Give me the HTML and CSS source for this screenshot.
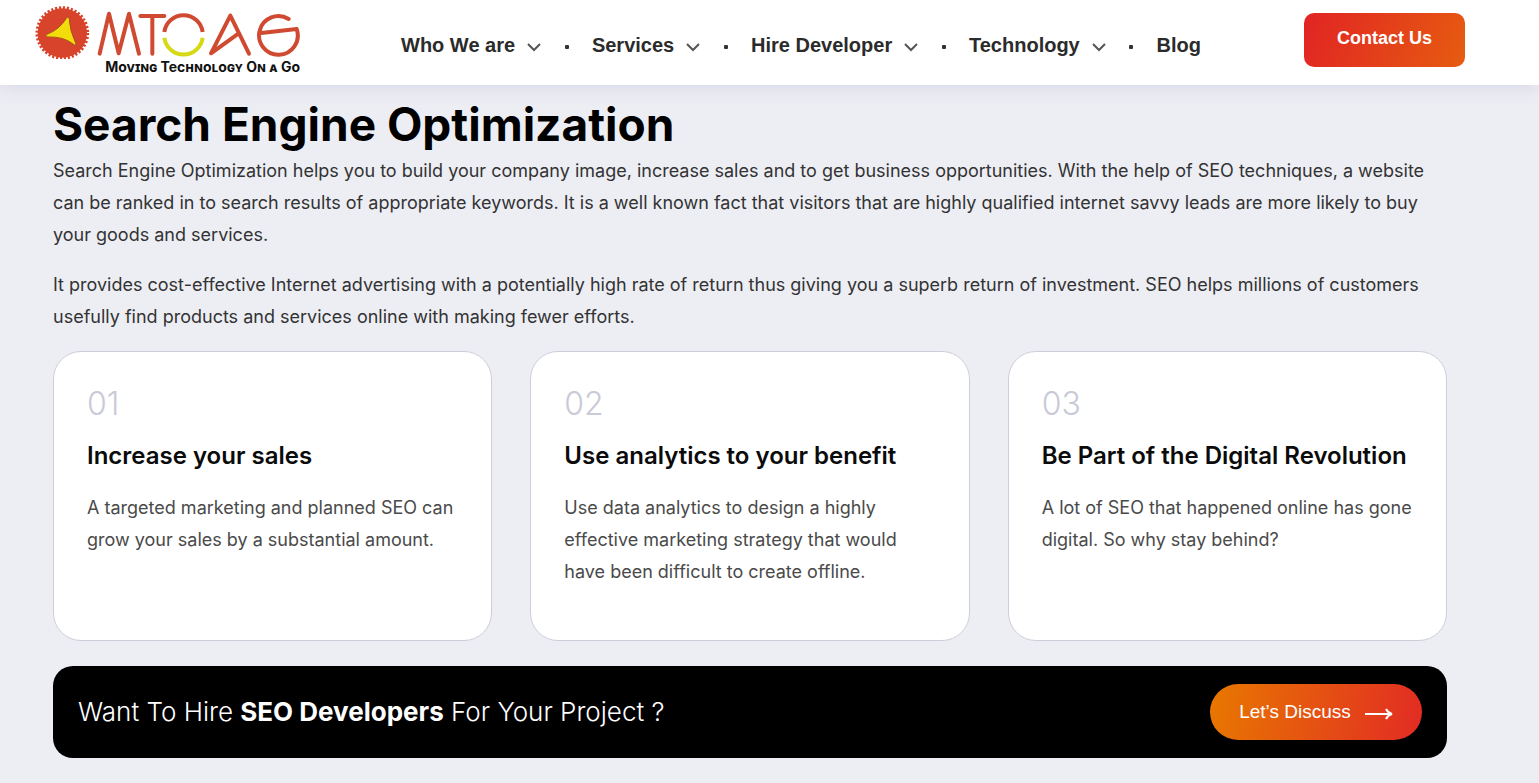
FILE: index.html
```html
<!DOCTYPE html>
<html lang="en">
<head>
    <meta charset="UTF-8">
    <meta name="viewport" content="width=device-width, initial-scale=1.0">
    <title>Search Engine Optimization</title>
    <link rel="stylesheet" href="styles.css">
</head>
<body>

    <header class="header">
        <a href="#" class="logo" aria-label="MTOAG">
            <svg class="logo-mark" viewBox="30 18 795 159" aria-hidden="true">
                <circle cx="112" cy="99" r="74" fill="#d8432b"/>
                <circle cx="112" cy="99" r="76" fill="none" stroke="#d8432b" stroke-width="9" pathLength="80" stroke-dasharray="1.1 0.9"/>
                <path d="M132 53 Q134 92 153 132 Q152 139 144 132 Q116 109 66 111 Q59 108 66 103 Q104 88 124 55 Q129 48 132 53Z" fill="#f2dc0c" stroke="#a8521b" stroke-width="3"/>
                <g fill="none" stroke="#cf4a31" stroke-width="12" stroke-linecap="round" stroke-linejoin="round">
                    <polyline points="224,161 252,41 281,160 312,41 342,161"/>
                    <path d="M346 48H418M382 48V161"/>
                    <path d="M418 96A58 58 0 0 1 533 96" stroke-linecap="butt"/>
                    <path d="M418 113A58 58 0 0 0 533 113" stroke="#d5d916" stroke-linecap="butt"/>
                    <polyline points="672,161 616,47 558,160 640,101"/>
                    <path d="M791 57A58 58 0 1 0 815 87L702 100"/>
                </g>
            </svg>
            <span class="logo-tagline">Moving Technology On a Go</span>
        </a>

        <nav class="nav">
            <a href="#" class="nav-link">Who We are <svg class="chevron" viewBox="0 0 14 9"><path d="M1 1l6 6 6-6"/></svg></a>
            <span class="dot"></span>
            <a href="#" class="nav-link">Services <svg class="chevron" viewBox="0 0 14 9"><path d="M1 1l6 6 6-6"/></svg></a>
            <span class="dot"></span>
            <a href="#" class="nav-link">Hire Developer <svg class="chevron" viewBox="0 0 14 9"><path d="M1 1l6 6 6-6"/></svg></a>
            <span class="dot"></span>
            <a href="#" class="nav-link">Technology <svg class="chevron" viewBox="0 0 14 9"><path d="M1 1l6 6 6-6"/></svg></a>
            <span class="dot"></span>
            <a href="#" class="nav-link">Blog</a>
        </nav>

        <button type="button" class="contact-btn">Contact Us</button>
    </header>

    <main class="container">
        <h1>Search Engine Optimization</h1>
        <p class="intro">Search Engine Optimization helps you to build your company image, increase sales and to get business opportunities. With the help of SEO techniques, a website can be ranked in to search results of appropriate keywords. It is a well known fact that visitors that are highly qualified internet savvy leads are more likely to buy your goods and services.</p>
        <p class="intro">It provides cost-effective Internet advertising with a potentially high rate of return thus giving you a superb return of investment. SEO helps millions of customers usefully find products and services online with making fewer efforts.</p>

        <div class="cards">
            <div class="card">
                <span class="card-number">01</span>
                <h2>Increase your sales</h2>
                <p>A targeted marketing and planned SEO can grow your sales by a substantial amount.</p>
            </div>
            <div class="card">
                <span class="card-number">02</span>
                <h2>Use analytics to your benefit</h2>
                <p>Use data analytics to design a highly effective marketing strategy that would have been difficult to create offline.</p>
            </div>
            <div class="card">
                <span class="card-number">03</span>
                <h2>Be Part of the Digital Revolution</h2>
                <p>A lot of SEO that happened online has gone digital. So why stay behind?</p>
            </div>
        </div>

        <section class="banner">
            <p class="banner-text">Want To Hire <strong>SEO Developers</strong> For Your Project ?</p>
            <button type="button" class="discuss-btn">Let’s Discuss
                <svg class="arrow" viewBox="0 0 28 12"><path d="M0 6h26M21 1q2 4 6 5q-4 1-6 5"/></svg>
            </button>
        </section>
    </main>

</body>
</html>
```
FILE: styles.css
```css
* {
    box-sizing: border-box;
}
body {
    margin: 0;
    font-family: Inter, "Open Sans", sans-serif;
    background-color: #edeef4;
    color: #333;
}
h1, h2, p {
    margin: 0;
}
a {
    color: inherit;
    text-decoration: none;
}

/* header */
.header {
    position: relative;
    display: flex;
    align-items: flex-start;
    height: 85px;
    padding: 0 74px 0 35px;
    background-color: #fff;
    box-shadow: 0 2px 18px rgba(90, 90, 160, 0.16);
}
.logo {
    display: flex;
    flex-direction: column;
    width: 265px;
    padding-top: 6px;
}
.logo-mark {
    display: block;
    width: 265px;
    height: 53px;
}
.logo-tagline {
    align-self: flex-end;
    font-size: 14px;
    line-height: 16px;
    font-weight: 700;
    font-variant: small-caps;
    white-space: nowrap;
    color: #111;
}
.nav {
    flex: 1;
    display: flex;
    align-items: center;
    justify-content: space-between;
    margin: 0 103px 0 101px;
    padding-top: 32px;
    font-family: "Liberation Sans", Arial, sans-serif;
    font-size: 20px;
    line-height: 26px;
    font-weight: bold;
    color: #2b2b2b;
}
.nav-link {
    display: flex;
    align-items: center;
    gap: 12px;
    white-space: nowrap;
}
.chevron {
    width: 14px;
    height: 9px;
    margin-top: 4px;
    fill: none;
    stroke: #555;
    stroke-width: 2;
}
.dot {
    width: 4px;
    height: 4px;
    margin-top: 4px;
    border-radius: 1px;
    background-color: #333;
}
.contact-btn {
    width: 161px;
    height: 54px;
    margin-top: 13px;
    padding: 0 0 4px;
    border: none;
    border-radius: 10px;
    background: linear-gradient(110deg, #e12424, #e65c10);
    color: #fff;
    font-family: "Liberation Sans", Arial, sans-serif;
    font-size: 18px;
    font-weight: bold;
    cursor: pointer;
}

/* content */
.container {
    padding: 12px 92px 24px 53px;
}
h1 {
    margin-bottom: 4px;
    font-size: 46px;
    line-height: 54px;
    font-weight: 700;
    color: #000;
}
.intro {
    margin-bottom: 18px;
    font-size: 18px;
    line-height: 32px;
}
.cards {
    display: grid;
    grid-template-columns: repeat(3, 1fr);
    gap: 38px;
    margin-bottom: 25px;
}
.card {
    padding: 32px 33px 52px;
    border: 1px solid #cdced9;
    border-radius: 28px;
    background-color: #fff;
}
.card-number {
    display: block;
    margin-bottom: 16px;
    font-size: 32px;
    line-height: 40px;
    font-weight: 300;
    color: #c9cad8;
}
.card h2 {
    margin-bottom: 20px;
    font-size: 24px;
    line-height: 32px;
    font-weight: 600;
    color: #0b0b0b;
}
.card p {
    font-size: 18px;
    line-height: 32px;
    color: #4a4a4a;
}
.banner {
    display: flex;
    align-items: center;
    justify-content: space-between;
    padding: 18px 25px;
    border-radius: 20px;
    background-color: #000;
}
.banner-text {
    font-size: 26px;
    line-height: 36px;
    font-weight: 300;
    color: #fff;
}
.banner-text strong {
    font-weight: 700;
}
.discuss-btn {
    display: flex;
    align-items: center;
    justify-content: center;
    gap: 14px;
    width: 212px;
    height: 56px;
    border: none;
    border-radius: 28px;
    background: linear-gradient(100deg, #e87800, #e22b24);
    color: #fff;
    font-family: "Liberation Sans", Arial, sans-serif;
    font-size: 19px;
    cursor: pointer;
}
.arrow {
    width: 28px;
    height: 12px;
    margin-top: 4px;
    fill: none;
    stroke: #fff;
    stroke-width: 2;
}
```
